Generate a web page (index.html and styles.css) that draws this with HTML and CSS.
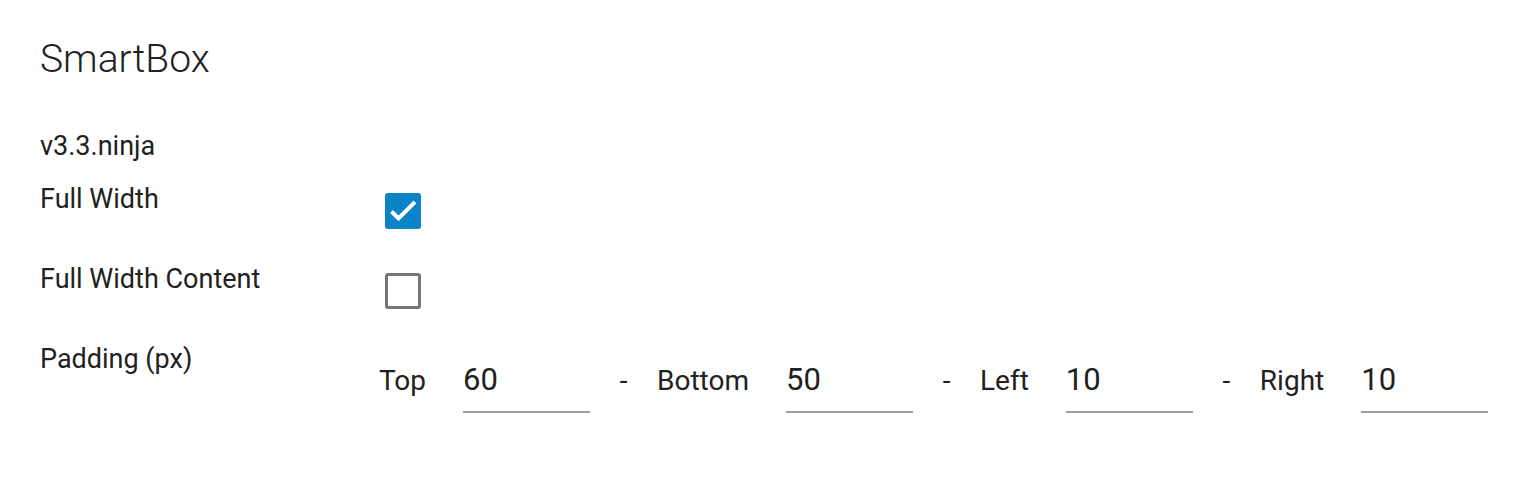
FILE: index.html
```html
<!DOCTYPE html>
<html>
<head>
<meta charset="utf-8">
<link rel="stylesheet" href="styles.css">
</head>
<body>
<div class="panel">
  <h1 class="title">SmartBox</h1>
  <div class="version">v3.3.ninja</div>
  <div class="row">
    <div class="label">Full Width</div>
    <div class="control"><span class="check checked"><svg viewBox="0 0 36 36" width="36" height="36"><path d="M6.5 18.5L13.5 25.5L30 9" fill="none" stroke="#fff" stroke-width="4"/></svg></span></div>
  </div>
  <div class="row">
    <div class="label">Full Width Content</div>
    <div class="control"><span class="check"></span></div>
  </div>
  <div class="row">
    <div class="label">Padding (px)</div>
    <div class="control padding">
      <span class="plabel">Top</span>
      <span class="field">60</span>
      <span class="dash">-</span>
      <span class="plabel">Bottom</span>
      <span class="field">50</span>
      <span class="dash">-</span>
      <span class="plabel">Left</span>
      <span class="field">10</span>
      <span class="dash">-</span>
      <span class="plabel">Right</span>
      <span class="field">10</span>
    </div>
  </div>
</div>
</body>
</html>
```
FILE: styles.css
```css
html, body { margin: 0; padding: 0; background: #fff; }
body { font-family: Roboto, "Noto Sans", sans-serif; color: #212121; }
.panel { padding: 29px 40px 0 40px; }
.title { margin: 0; font-weight: 300; font-size: 39px; line-height: 60px; color: #222; }
.version { margin-top: 39px; font-size: 27px; line-height: 36px; }
.row { display: flex; align-items: flex-start; height: 80px; }
.version + .row { margin-top: 17px; }
.label { width: 345px; font-size: 27px; line-height: 36px; flex: none; }
.control { padding-top: 12px; }
.check { display: block; box-sizing: border-box; width: 36px; height: 36px; border: 3px solid #757575; border-radius: 3px; }
.check.checked { background: #0a84c6; border: 0; }
.check svg { display: block; }
.padding { display: flex; align-items: flex-start; padding-top: 0; margin-left: -6px; font-size: 28px; }
.plabel { line-height: 36px; margin-top: 22px; }
.field { box-sizing: border-box; width: 127px; margin-left: 37px; font-size: 31px; line-height: 40px; height: 72px; border-bottom: 2px solid #9e9e9e; padding-top: 19px; padding-left: 0; }
.dash { width: 67px; text-align: center; line-height: 36px; margin-top: 22px; }
```
